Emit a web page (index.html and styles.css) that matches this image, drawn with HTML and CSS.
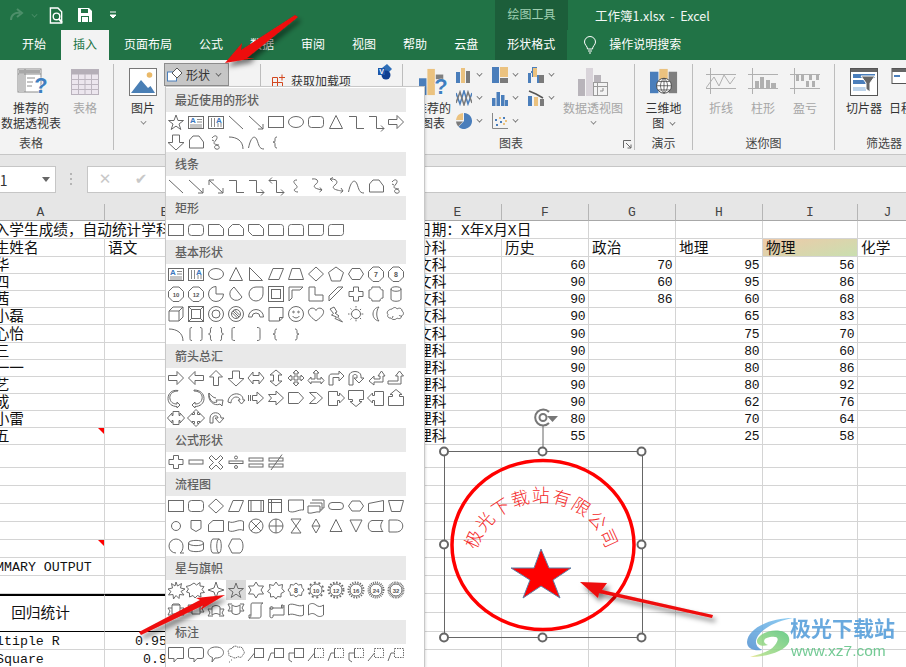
FILE: index.html
```html
<!DOCTYPE html>
<html lang="zh-CN">
<head>
<meta charset="utf-8">
<title>工作簿1.xlsx - Excel</title>
<link rel="stylesheet" href="styles.css">
</head>
<body>
<svg class="defs" width="0" height="0">
<symbol id="st" viewBox="0 0 20 20"><path d="M10 3l2 5.500h5.500l-4.500 3.500 1.800 5.500-4.800-3.400-4.800 3.400 1.800-5.500-4.500-3.500h5.500z"/></symbol>
<symbol id="tb" viewBox="0 0 20 20"><rect x="2.500" y="4.500" width="15" height="12"/><path d="M11 7.500h5M11 10h5M4 13h12M4 15h12" stroke="#8a8a8a"/></symbol>
<symbol id="vt" viewBox="0 0 20 20"><rect x="2.500" y="4.500" width="15" height="12"/><path d="M5.500 6v9M8.500 6v9M15 11v4M12 11v4" stroke="#8a8a8a"/></symbol>
<symbol id="ln" viewBox="0 0 20 20"><path d="M3 4l14 13"/></symbol>
<symbol id="la" viewBox="0 0 20 20"><path d="M3 4l14 13M17 12v5h-5"/></symbol>
<symbol id="da" viewBox="0 0 20 20"><path d="M3 4l14 13M17 12v5h-5M3 9V4h5"/></symbol>
<symbol id="re" viewBox="0 0 20 20"><rect x="2.500" y="4.500" width="15" height="11"/></symbol>
<symbol id="ov" viewBox="0 0 20 20"><ellipse cx="10" cy="10" rx="7.500" ry="5.500"/></symbol>
<symbol id="rr" viewBox="0 0 20 20"><rect x="2.500" y="4.500" width="15" height="11" rx="3"/></symbol>
<symbol id="tr" viewBox="0 0 20 20"><path d="M10 3.500l6.500 13h-13z"/></symbol>
<symbol id="el" viewBox="0 0 20 20"><path d="M3 4.500h7.500v12H18"/></symbol>
<symbol id="ea" viewBox="0 0 20 20"><path d="M3 4.500h7.500v12H18M15 13.500l3 3-3 3"/></symbol>
<symbol id="ed" viewBox="0 0 20 20"><path d="M3 4.500h7.500v12H18M15 13.500l3 3-3 3M6 1.500l-3 3 3 3"/></symbol>
<symbol id="ar" viewBox="0 0 20 20"><path d="M2.500 7.500h8.500V3.500l6.500 6.500-6.500 6.500v-4H2.500z"/></symbol>
<symbol id="al" viewBox="0 0 20 20"><path d="M17.500 7.500H9V3.500L2.500 10 9 16.500v-4h8.500z"/></symbol>
<symbol id="au" viewBox="0 0 20 20"><path d="M7.500 17.500V9h-4L10 2.500 16.500 9h-4v8.500z"/></symbol>
<symbol id="ad" viewBox="0 0 20 20"><path d="M6.500 3h7v7.500h4.500L10 18 2 10.500h4.500z"/></symbol>
<symbol id="ff" viewBox="0 0 20 20"><path d="M7 4h6l4.500 6v6h-14V8z"/></symbol>
<symbol id="sc" viewBox="0 0 20 20"><path d="M6 6c3-4 7-2 4 2s-3 3 1 5 2 5-1 4-1-5 3-4M6 8l2 1"/></symbol>
<symbol id="ac" viewBox="0 0 20 20"><path d="M3 5c8 0 14 4 14 12"/></symbol>
<symbol id="cv" viewBox="0 0 20 20"><path d="M2.500 16C5 4 9 3 11 8s2 9 7 9"/></symbol>
<symbol id="lb" viewBox="0 0 20 20"><path d="M11 5c-2 0-2 1-2 3s0 2-2 2c2 0 2 1 2 3s0 3 2 3"/></symbol>
<symbol id="rb" viewBox="0 0 20 20"><path d="M9 5c2 0 2 1 2 3s0 2 2 2c-2 0-2 1-2 3s0 3-2 3"/></symbol>
<symbol id="c1" viewBox="0 0 20 20"><path d="M11 4c-5 0-3 3-1 5s1 3-1 4 0 3 3 3"/></symbol>
<symbol id="c2" viewBox="0 0 20 20"><path d="M6 3c6-1 7 3 4 5s-2 4 2 5l4 1M14 11.500l2 2.500-2.500 2"/></symbol>
<symbol id="c3" viewBox="0 0 20 20"><path d="M5 3c7 0 7 4 4 6s-2 4 2 5 5 1 6 1M15 12l2 3-2.500 2M7 1.500L4 3l2.500 2.500"/></symbol>
<symbol id="s1" viewBox="0 0 20 20"><path d="M2.500 4.500h11l4 4v7h-15z"/></symbol>
<symbol id="s2" viewBox="0 0 20 20"><path d="M6.500 4.500h7l4 4v7h-15v-7z"/></symbol>
<symbol id="s3" viewBox="0 0 20 20"><path d="M2.500 4.500h11l4 4v7h-11l-4-4z"/></symbol>
<symbol id="s4" viewBox="0 0 20 20"><path d="M2.500 4.500h12c2 0 3 1 3 3v8h-15z"/></symbol>
<symbol id="s5" viewBox="0 0 20 20"><path d="M5.500 4.500h9c2 0 3 1 3 3v8h-15v-8c0-2 1-3 3-3z"/></symbol>
<symbol id="s6" viewBox="0 0 20 20"><path d="M2.500 4.500h15v8c0 2-1 3-3 3h-12z"/></symbol>
<symbol id="s7" viewBox="0 0 20 20"><path d="M5.500 4.500h12v8c0 2-1 3-3 3h-12v-8c0-2 1-3 3-3z"/></symbol>
<symbol id="rt" viewBox="0 0 20 20"><path d="M3.500 3.500v13h13z"/></symbol>
<symbol id="pg" viewBox="0 0 20 20"><path d="M7 4.500h10.500L13 15.500H2.500z"/></symbol>
<symbol id="tz" viewBox="0 0 20 20"><path d="M6 4.500h8l3.500 11h-15z"/></symbol>
<symbol id="di" viewBox="0 0 20 20"><path d="M10 3l7.500 7-7.500 7-7.500-7z"/></symbol>
<symbol id="pn" viewBox="0 0 20 20"><path d="M10 3l7.500 5.500-3 8.500h-9l-3-8.500z"/></symbol>
<symbol id="hx" viewBox="0 0 20 20"><path d="M6 4.500h8l3.500 5.500-3.500 5.500H6L2.500 10z"/></symbol>
<symbol id="oc" viewBox="0 0 20 20"><path d="M7 3h6l4.500 4.500v5.500L13 17.500H7L2.500 13V7.500z"/></symbol>
<symbol id="pi" viewBox="0 0 20 20"><path d="M10 10h7.500A7.500 7.500 0 1 1 10 2.500z"/></symbol>
<symbol id="ch" viewBox="0 0 20 20"><path d="M8 3L16 13a6.500 6.500 0 1 1-10-8z"/></symbol>
<symbol id="td" viewBox="0 0 20 20"><path d="M17 3v7a7 7 0 1 1-7-7z"/></symbol>
<symbol id="fr" viewBox="0 0 20 20"><rect x="2.500" y="2.500" width="15" height="15"/><rect x="5.500" y="5.500" width="9" height="9"/></symbol>
<symbol id="hf" viewBox="0 0 20 20"><path d="M3 17V3h14l-3 3H6v8z"/></symbol>
<symbol id="lh" viewBox="0 0 20 20"><path d="M3 3h6v8h8v6H3z"/></symbol>
<symbol id="ds" viewBox="0 0 20 20"><path d="M3 17v-5L12 3h5z"/></symbol>
<symbol id="pl" viewBox="0 0 20 20"><path d="M7.500 3h5v4.500H17v5h-4.500V17h-5v-4.500H3v-5h4.500z"/></symbol>
<symbol id="pq" viewBox="0 0 20 20"><path d="M6 3h8c0 2 1 3 3 3v8c-2 0-3 1-3 3H6c0-2-1-3-3-3V6c2 0 3-1 3-3z"/></symbol>
<symbol id="cn" viewBox="0 0 20 20"><path d="M5 5v10c0 3 10 3 10 0V5M5 5c0-3 10-3 10 0s-10 3-10 0z"/></symbol>
<symbol id="cb" viewBox="0 0 20 20"><path d="M3 7l4-4h10v10l-4 4H3zM3 7h10v10M13 7l4-4"/></symbol>
<symbol id="bv" viewBox="0 0 20 20"><rect x="2.500" y="2.500" width="15" height="15"/><rect x="5.500" y="5.500" width="9" height="9"/><path d="M2.500 2.500l3 3M17.500 2.500l-3 3M2.500 17.500l3-3M17.500 17.500l-3-3"/></symbol>
<symbol id="dn" viewBox="0 0 20 20"><circle cx="10" cy="10" r="7.500"/><circle cx="10" cy="10" r="4"/></symbol>
<symbol id="ns" viewBox="0 0 20 20"><circle cx="10" cy="10" r="7.500"/><circle cx="10" cy="10" r="4.500"/><path d="M7 7l6 6M6 8.500l5.500 5.500M8.500 6l5.500 5.500"/></symbol>
<symbol id="ba" viewBox="0 0 20 20"><path d="M2.500 13a7.500 7.500 0 0 1 15 0h-3.500a4 4 0 0 0-8 0z"/></symbol>
<symbol id="fc" viewBox="0 0 20 20"><path d="M3 3.500h14v10l-3.500 3.500H3zM17 13.500h-3.500V17"/></symbol>
<symbol id="sm" viewBox="0 0 20 20"><circle cx="10" cy="10" r="7.500"/><circle cx="7.500" cy="8" r=".8"/><circle cx="12.500" cy="8" r=".8"/><path d="M6.500 12c2 2.500 5 2.500 7 0"/></symbol>
<symbol id="ht" viewBox="0 0 20 20"><path d="M10 17C3 12 2 9 2.500 7c1-3.500 6-4 7.500-.5 1.500-3.500 6.500-3 7.500.5.500 2-.5 5-7.500 10z"/></symbol>
<symbol id="lt" viewBox="0 0 20 20"><path d="M4 5l4-2 3 5-2 1 4 3-1.500 1 5 5-7.500-3.500 1.500-1.500-5-2 2-1.500z"/></symbol>
<symbol id="su" viewBox="0 0 20 20"><circle cx="10" cy="10" r="4.500"/><path d="M10 2v2.500M10 15.500V18M2 10h2.500M15.500 10H18M4.500 4.500l1.500 1.500M14 14l1.500 1.500M4.500 15.500L6 14M14 6l1.500-1.500" stroke-dasharray="1.500 .7"/></symbol>
<symbol id="mo" viewBox="0 0 20 20"><path d="M13 3c-8 1-8 13 0 14-3-3-3-11 0-14z"/></symbol>
<symbol id="cl" viewBox="0 0 20 20"><path d="M6 5c2-2 4-2 5 0 2-1.500 5-1 5 2 2 1 2 4-.5 5 0 3-3 3-4.500 2-1 2-5 2-6 0-3 .5-4-2-3-3.500-2-2 0-5 4-5.500zM15.500 12c-1 0-2 0-2.500-1M6 14c.5-.500 1-1 1-2"/></symbol>
<symbol id="bp" viewBox="0 0 20 20"><path d="M6 3.500c-2 0-2 1-2 2v9c0 1 0 2 2 2M14 3.500c2 0 2 1 2 2v9c0 1 0 2-2 2"/></symbol>
<symbol id="bc" viewBox="0 0 20 20"><path d="M6 3.500c-2 0-1.500 2-1.500 3.500S4 10 2.500 10c1.500 0 2 1.500 2 3s-.5 3.500 1.500 3.500M14 3.500c2 0 1.500 2 1.500 3.500s.5 3 2 3c-1.500 0-2 1.500-2 3s.5 3.500-1.500 3.500"/></symbol>
<symbol id="lk" viewBox="0 0 20 20"><path d="M9 3.500c-3 0-3 1-3 2v9c0 1 0 2 3 2"/></symbol>
<symbol id="rk" viewBox="0 0 20 20"><path d="M11 3.500c3 0 3 1 3 2v9c0 1 0 2-3 2"/></symbol>
<symbol id="lr" viewBox="0 0 20 20"><path d="M2 10l5-6v3.500h6V4l5 6-5 6v-3.500H7V16z"/></symbol>
<symbol id="ud" viewBox="0 0 20 20"><path d="M10 2l6 5h-3.500v6H16l-6 5-6-5h3.500V7H4z"/></symbol>
<symbol id="qa" viewBox="0 0 20 20"><path d="M10 2l3 3h-2v4h4V7l3 3-3 3v-2h-4v4h2l-3 3-3-3h2v-4H5v2l-3-3 3-3v2h4V5H7z"/></symbol>
<symbol id="lu" viewBox="0 0 20 20"><path d="M10 2l3 3h-2v6h4V9l3 3.500L15 16v-2H5v2l-3-3.500L5 9v2h4V5H7z"/></symbol>
<symbol id="be" viewBox="0 0 20 20"><path d="M3 17V9c0-2 1-3 3-3h7V3l5 5-5 5V9.500H7V17z"/></symbol>
<symbol id="ut" viewBox="0 0 20 20"><path d="M3 17V8c0-6 12-6 12 0v2h3l-5 5-5-5h3V8c0-2-4-2-4 0v9z"/></symbol>
<symbol id="lt2" viewBox="0 0 20 20"><path d="M3 13l5-5v3h6V8h-2l3.500-5L19 8h-2v6H8v3z"/></symbol>
<symbol id="bu" viewBox="0 0 20 20"><path d="M2 13h10V8h-2.500L13.500 3l4 5H15v8H2z"/></symbol>
<symbol id="cr" viewBox="0 0 20 20"><path d="M12 3C6 3 3 7 4 11s4 5 7 5v-2l3 3-3 3v-1.500c-5 0-9-3-9-8s4-9 10-8z"/></symbol>
<symbol id="cf" viewBox="0 0 20 20"><path d="M8 3c6 0 9 4 8 8s-4 5-7 5v-2l-3 3 3 3v-1.500c5 0 9-3 9-8S14 2 8 2z"/></symbol>
<symbol id="cu" viewBox="0 0 20 20"><path d="M3 5c0 6 3 11 8 9l-1-2 7 0-1 6-2-2c-6 3-13-4-11-11zM3 5c2 2 4 5 7 5"/></symbol>
<symbol id="cd" viewBox="0 0 20 20"><path d="M2 14c0-6 6-9 10-8s5 3 5 6h2l-3.500 4-3.500-4h2c0-2-2-3-4-3s-5 2-5 6z"/></symbol>
<symbol id="sa" viewBox="0 0 20 20"><path d="M2.500 7v6M4.500 7v6M6.500 7.500H11V4l6.500 6-6.500 6v-3.500H6.500z"/></symbol>
<symbol id="no" viewBox="0 0 20 20"><path d="M2.500 6.500H10V3l7.500 7-7.500 7v-3.500H2.500L5.500 10z"/></symbol>
<symbol id="hp" viewBox="0 0 20 20"><path d="M2.500 4.500h10l5 5.500-5 5.500h-10z"/></symbol>
<symbol id="cv2" viewBox="0 0 20 20"><path d="M3.500 4.500h7l6 5.500-6 5.500h-7l6-5.500z"/></symbol>
<symbol id="ca" viewBox="0 0 20 20"><path d="M2.500 3.500h9v4h2V5l5 5-5 5v-2.500h-2v5h-9z"/></symbol>
<symbol id="cw" viewBox="0 0 20 20"><path d="M2.500 2.500h15v9h-4v2h2.500l-6 5-6-5h2.500v-2h-4z"/></symbol>
<symbol id="cg" viewBox="0 0 20 20"><path d="M17.500 3.500h-9v4h-2V5l-5 5 5 5v-2.500h2v5h9z"/></symbol>
<symbol id="cj" viewBox="0 0 20 20"><path d="M2.500 17.500v-9h4v-2H4l6-5 6 5h-2.500v2h4v9z"/></symbol>
<symbol id="ck" viewBox="0 0 20 20"><path d="M7 3.500h6v4h1V5l4.500 5L14 15v-2.500h-1v4H7v-4H6V15l-4.500-5L6 5v2.500h1z"/></symbol>
<symbol id="cq" viewBox="0 0 20 20"><path d="M10 1.500l3 3h-1.500v2H14l-.5-1.500 5 5-5 5 .5-1.500h-2.500v2H13l-3 3-3-3h1.500v-2H6l.5 1.500-5-5 5-5L6 6.500h2.500v-2H7z"/></symbol>
<symbol id="ca2" viewBox="0 0 20 20"><path d="M4 15V10c0-7 11-7 11 0h3l-4.500 5L9 10h3c0-3-5-3-5 0v5z"/></symbol>
<symbol id="pm" viewBox="0 0 20 20"><path d="M7.500 3.500h5v4H17v5h-4.500v4h-5v-4H3v-5h4.500z"/></symbol>
<symbol id="mi" viewBox="0 0 20 20"><rect x="3" y="8" width="14" height="4"/></symbol>
<symbol id="ti" viewBox="0 0 20 20"><path d="M5.500 3.500L10 8l4.500-4.500 2.500 2.500L12.500 10.500 17 15l-2.500 2.500L10 13l-4.500 4.500L3 15l4.500-4.500L3 6z"/></symbol>
<symbol id="dv" viewBox="0 0 20 20"><rect x="3" y="9" width="14" height="2.500"/><circle cx="10" cy="5.500" r="1.500"/><circle cx="10" cy="15" r="1.500"/></symbol>
<symbol id="eq" viewBox="0 0 20 20"><rect x="3" y="6" width="14" height="3"/><rect x="3" y="12" width="14" height="3"/></symbol>
<symbol id="ne" viewBox="0 0 20 20"><rect x="3" y="6" width="14" height="3"/><rect x="3" y="12" width="14" height="3"/><path d="M5 18L16 2.500"/></symbol>
<symbol id="fp" viewBox="0 0 20 20"><rect x="2.500" y="4.500" width="15" height="11"/><path d="M5 4.500v11M15 4.500v11"/></symbol>
<symbol id="fi" viewBox="0 0 20 20"><rect x="2.500" y="3.500" width="13" height="13"/><path d="M2.500 6.500h13M5.500 3.500v13"/></symbol>
<symbol id="fd" viewBox="0 0 20 20"><path d="M2.500 4h15v10c-5-1-10 4-15 1z"/></symbol>
<symbol id="fm" viewBox="0 0 20 20"><path d="M6 4h12v8h-2M4 7h12v7h-2M2 10h12v6c-4-1-8 2-12 1z"/></symbol>
<symbol id="ft" viewBox="0 0 20 20"><rect x="2.500" y="6.500" width="15" height="7" rx="3.500"/></symbol>
<symbol id="fh" viewBox="0 0 20 20"><path d="M6 5h8l3.500 5-3.500 5H6l-3.500-5z"/></symbol>
<symbol id="fn" viewBox="0 0 20 20"><path d="M2.500 7.500l15-3v11h-15z"/></symbol>
<symbol id="fo" viewBox="0 0 20 20"><path d="M2.500 4.500h15l-3 11h-9z"/></symbol>
<symbol id="fc2" viewBox="0 0 20 20"><circle cx="10" cy="10" r="4.500"/></symbol>
<symbol id="fg" viewBox="0 0 20 20"><path d="M5 4.500h10v8l-5 3-5-3z"/></symbol>
<symbol id="fk" viewBox="0 0 20 20"><path d="M7 4.500h10.500v11h-15v-7z"/></symbol>
<symbol id="fa" viewBox="0 0 20 20"><path d="M2.500 5.500c5 3 10-3 15 0v9c-5-3-10 3-15 0z"/></symbol>
<symbol id="fj" viewBox="0 0 20 20"><circle cx="10" cy="10" r="7"/><path d="M5 5l10 10M15 5L5 15"/></symbol>
<symbol id="fr2" viewBox="0 0 20 20"><circle cx="10" cy="10" r="7"/><path d="M10 3v14M3 10h14"/></symbol>
<symbol id="fl" viewBox="0 0 20 20"><path d="M5 3h10l-10 14h10z"/></symbol>
<symbol id="fs" viewBox="0 0 20 20"><path d="M10 3l4 7-4 7-4-7zM6 10h8"/></symbol>
<symbol id="fx" viewBox="0 0 20 20"><path d="M10 3.500l6 12H4z"/></symbol>
<symbol id="fe" viewBox="0 0 20 20"><path d="M4 4h12l-6 12z"/></symbol>
<symbol id="fb" viewBox="0 0 20 20"><path d="M6 4.500h11c-3 3-3 8 0 11H6c-5-1-5-10 0-11z"/></symbol>
<symbol id="fw" viewBox="0 0 20 20"><path d="M3 4h7c9 0 9 12 0 12H3z"/></symbol>
<symbol id="fq" viewBox="0 0 20 20"><path d="M10 17a7 7 0 1 1 7-7c0 3-1 6-3 7h4"/></symbol>
<symbol id="fy" viewBox="0 0 20 20"><path d="M2.500 7v6c0 3.500 15 3.500 15 0V7M2.500 7c0-3.500 15-3.500 15 0s-15 3.500-15 0z"/></symbol>
<symbol id="fz" viewBox="0 0 20 20"><path d="M7 3h6c3 0 3 14 0 14H7C4 17 4 3 7 3zM13 3c-3 0-3 14 0 14"/></symbol>
<symbol id="ff2" viewBox="0 0 20 20"><path d="M6 3h8c4 2 4 12 0 14H6l-3.500-7z"/></symbol>
<symbol id="x1" viewBox="0 0 20 20"><path d="M10 2l1.500 4 4-2.500-1 4.500 4.500 1-4 2.500 3 3.500-4.500-.5-.5 4-3-3-2.500 3.500-.5-4.500-4.500.5 2.500-3.500L2 9l4.500-1-1-4.500 3.500 2.500z"/></symbol>
<symbol id="x2" viewBox="0 0 20 20"><path d="M8 3l2.500 2 3.500-2.500 0 3.500 4 .5-2 3 2.500 3-4 .5.500 4-3.500-1.500-2.500 2.500-2-2.500-3.500 1.500 0-4-3-1 2-3-2.500-2.500 4-1z"/></symbol>
<symbol id="s4p" viewBox="0 0 20 20"><path d="M10 2l2 6 6 2-6 2-2 6-2-6-6-2 6-2z"/></symbol>
<symbol id="s6p" viewBox="0 0 20 20"><path d="M10 2l2.500 4h5l-2.500 4 2.500 4h-5l-2.500 4-2.500-4h-5l2.500-4-2.500-4h5z"/></symbol>
<symbol id="s7p" viewBox="0 0 20 20"><path d="M10 2l2.500 3.500 4-1-.5 4.200 2.500 2.800-3.500 2 0 3.500-3.500-.5-1.500 2.500-2-2.500-3.500.5 0-3.500-3-2 2.500-2.800-.5-4.200 4 1z"/></symbol>
<symbol id="s8n" viewBox="0 0 20 20"><path d="M10 3l2.500 2 3-.5.5 3 2 2.500-2 2.500-.5 3-3-.5-2.500 2-2.500-2-3 .5-.5-3-2-2.500 2-2.500.5-3 3 .5z"/></symbol>
<symbol id="s10" viewBox="0 0 20 20"><circle cx="10" cy="10" r="7.500" stroke-width="1.800" stroke-dasharray="2 2.700"/><circle cx="10" cy="10" r="6"/></symbol>
<symbol id="s12" viewBox="0 0 20 20"><circle cx="10" cy="10" r="7.500" stroke-width="2" stroke-dasharray="1.600 1.600"/><circle cx="10" cy="10" r="6"/></symbol>
<symbol id="s16" viewBox="0 0 20 20"><circle cx="10" cy="10" r="7.500" stroke-width="2" stroke-dasharray="1.300 1.300"/><circle cx="10" cy="10" r="6"/></symbol>
<symbol id="s24" viewBox="0 0 20 20"><circle cx="10" cy="10" r="7.500" stroke-width="2" stroke-dasharray="1 1"/><circle cx="10" cy="10" r="6"/></symbol>
<symbol id="s32" viewBox="0 0 20 20"><circle cx="10" cy="10" r="7.500" stroke-width="2" stroke-dasharray=".8 .7"/><circle cx="10" cy="10" r="6"/></symbol>
<symbol id="r1" viewBox="0 0 20 20"><path d="M6 5h8v9H6zM6 8H2l2 3-2 4h6v-1M14 8h4l-2 3 2 4h-6v-1M6 5l1-1 6 0 1 1"/></symbol>
<symbol id="r2" viewBox="0 0 20 20"><path d="M6 5h8v9H6zM6 12H2l2-3-2-4h4M14 12h4l-2-3 2-4h-4"/></symbol>
<symbol id="r3" viewBox="0 0 20 20"><path d="M6 7c3-2 5-2 8 0v8c-3-2-5-2-8 0zM6 9H2l2 4-2 3h5M14 9h4l-2 4 2 3h-5"/></symbol>
<symbol id="r4" viewBox="0 0 20 20"><path d="M6 5c3 2 5 2 8 0v8c-3 2-5 2-8 0zM6 11H2l2-3-2-4h4M14 11h4l-2-3 2-4h-4"/></symbol>
<symbol id="sv" viewBox="0 0 20 20"><path d="M6 3h11c-2 0-2 3-2 3v10c0 2-2 2-2 2H3c2 0 2-3 2-3V5c0-2 1-2 1-2zM5 15H3v3"/></symbol>
<symbol id="sh" viewBox="0 0 20 20"><path d="M4 8h13v-3h-1.500v3M4 8v9c0 1 3 1 3 0v-2h11V5M4 8c0-2 3-2 3 0s-3 2-3 0"/></symbol>
<symbol id="wv" viewBox="0 0 20 20"><path d="M2.500 5c5-3 10 3 15 0v10c-5 3-10-3-15 0z"/></symbol>
<symbol id="wd" viewBox="0 0 20 20"><path d="M2.500 5c2.500-2 5-2 7.500 0s5 2 7.500 0v10c-2.500 2-5 2-7.500 0s-5-2-7.500 0z"/></symbol>
<symbol id="k1" viewBox="0 0 20 20"><path d="M2.500 3.500h15v11H11l-3 3.500v-3.500H2.500z"/></symbol>
<symbol id="k2" viewBox="0 0 20 20"><path d="M5 3.500h10c2 0 2.500 1 2.500 2.500v6c0 2-1 2.500-2.500 2.500h-4l-3 3.500v-3.500H5c-2 0-2.500-1-2.500-2.500V6c0-2 1-2.500 2.500-2.500z"/></symbol>
<symbol id="k3" viewBox="0 0 20 20"><path d="M10 3c10 0 10 11 0 11H9l-3 4 .5-4.500C-1 11 1 3 10 3z"/></symbol>
<symbol id="k4" viewBox="0 0 20 20"><path d="M7 3c2-1.500 4-1 5 .5 2-1 5-.5 5 2.500 2 1.500 1.500 4.500-.5 5 0 2.500-3 3-4.500 1.500-1.500 2-5 2-6 0-3 .5-4-2-3-3.500-2-2 0-4.500 3-4.500zM5 16h1M3 18h1" stroke-dasharray="1.500 .6"/></symbol>
<symbol id="k5" viewBox="0 0 20 20"><rect x="8.500" y="4.500" width="9" height="9"/><path d="M8.500 9L2 17"/></symbol>
<symbol id="k6" viewBox="0 0 20 20"><rect x="8.500" y="4.500" width="9" height="9"/><path d="M8.500 9H5L2 17"/></symbol>
<symbol id="k7" viewBox="0 0 20 20"><rect x="8.500" y="4.500" width="9" height="9"/><path d="M8.500 9H3v7l3 2"/></symbol>
<symbol id="k8" viewBox="0 0 20 20"><rect x="8.500" y="4.500" width="9" height="9" stroke-dasharray="1.500 1"/><path d="M8.500 5v9M8.500 9L2 17"/></symbol>
<symbol id="k9" viewBox="0 0 20 20"><rect x="8.500" y="4.500" width="9" height="9" stroke-dasharray="1.500 1"/><path d="M8.500 5v9M8.500 9H5L2 17"/></symbol>
<symbol id="k10" viewBox="0 0 20 20"><rect x="8.500" y="4.500" width="9" height="9" stroke-dasharray="1.500 1"/><path d="M8.500 5v9M8.500 9H3v7l3 2"/></symbol>
<symbol id="k11" viewBox="0 0 20 20"><rect x="8.500" y="4.500" width="9" height="9" stroke-dasharray="1.500 1"/><path d="M8.500 9L2 17"/></symbol>
<symbol id="k12" viewBox="0 0 20 20"><rect x="8.500" y="4.500" width="9" height="9" stroke-dasharray="1.500 1"/><path d="M8.500 9H5L2 17"/></symbol>
</svg>

<div class="app">
  <header class="titlebar">
    <div class="qat">
      <svg class="q-redo" viewBox="0 0 18 14"><path d="M2 12c0-5 4-8 9-7M8 1l5 4-5 4" fill="none" stroke="#4d8f6a" stroke-width="2"/></svg>
      <span class="chev dim"></span>
      <svg class="q-prev" viewBox="0 0 16 18"><path d="M1.500 1h8l4 4v12h-12z" fill="none" stroke="#fff" stroke-width="1.500"/><circle cx="8" cy="10" r="3.500" fill="#217346" stroke="#fff" stroke-width="1.500"/><path d="M10.500 12.500l3.500 4" stroke="#fff" stroke-width="2"/></svg>
      <svg class="q-save" viewBox="0 0 14 14"><path d="M0 0h11l3 3v11H0z" fill="#fff"/><rect x="3" y="1" width="7" height="4" fill="#217346"/><rect x="3" y="8" width="8" height="6" fill="#217346"/><rect x="4" y="9" width="6" height="5" fill="#fff"/></svg>
      <svg class="q-more" viewBox="0 0 8 8"><path d="M1 1h6M1 4h6l-3 3z" fill="#fff" stroke="#fff"/></svg>
    </div>
    <div class="ctx-title">绘图工具</div>
    <div class="doc-title">工作簿1.xlsx&nbsp; -&nbsp; Excel</div>
  </header>

  <nav class="tabs">
    <span class="tab">开始</span>
    <span class="tab on">插入</span>
    <span class="tab">页面布局</span>
    <span class="tab">公式</span>
    <span class="tab">数据</span>
    <span class="tab">审阅</span>
    <span class="tab">视图</span>
    <span class="tab">帮助</span>
    <span class="tab">云盘</span>
    <span class="tab ctx">形状格式</span>
    <svg class="bulb" viewBox="0 0 14 18"><path d="M4.500 13c0-3-3-4-3-7a5.500 5.500 0 0 1 11 0c0 3-3 4-3 7zM5 15h4M6 17h2" fill="none" stroke="#fff"/></svg>
    <span class="search">操作说明搜索</span>
  </nav>

  <section class="ribbon">
    <div class="g g1">
      <div class="gb">
        <div class="b w62">
          <svg class="ico" viewBox="0 0 28 28"><rect x="1" y="1" width="23" height="23" fill="#fff" stroke="#8c8c8c"/><path d="M1 6h23M8 1v23" stroke="#8c8c8c"/><rect x="2" y="2" width="21" height="3.500" fill="#a8a8a8"/><rect x="2" y="7" width="5.500" height="16" fill="#c4c4c4"/><path d="M10 10h8M10 14h6M10 18h5" stroke="#8c8c8c"/></svg>
          <svg class="qm" viewBox="0 0 16 22"><text x="8" y="19" class="qt">?</text></svg>
          <span>推荐的</span><span>数据透视表</span>
        </div>
        <div class="b w28 off">
          <svg class="ico" viewBox="0 0 28 28"><rect x="0.500" y="1.500" width="27" height="25" fill="#ece6ee" stroke="#b9b2bc"/><rect x="0.500" y="1.500" width="27" height="5" fill="#b5afb8"/><path d="M0 11.500h28M0 16.500h28M0 21.500h28M7.500 6v21M14 6v21M20.500 6v21" stroke="#bdb6c0"/></svg>
          <span>表格</span>
        </div>
      </div>
      <div class="lab w62">表格</div>
    </div>

    <div class="g g2">
      <div class="gb">
        <div class="b w28 ml15">
          <svg class="ico" viewBox="0 0 28 28"><rect x=".5" y=".5" width="27" height="27" fill="#fff" stroke="#777"/><circle cx="20.500" cy="7" r="2.800" fill="#eab968"/><path d="M2 25l10-13 7 8 2.500-2 4.500 7z" fill="#4a7fb5"/></svg>
          <span>图片</span><span class="chev"></span>
        </div>
        <div class="shapes">
          <svg class="shp" viewBox="0 0 16 16"><rect x=".5" y="5" width="9" height="9" fill="#fff" stroke="#4a7ebb"/><path d="M10 1l5 5-5 5-5-5z" fill="#fff" stroke="#555"/></svg>
          <span>形状</span><span class="chev tight"></span>
        </div>
      </div>
    </div>

    <div class="g g3">
      <div class="addin">
        <svg class="ai" viewBox="0 0 14 14"><path d="M.5 3.500h5v5h5v5H.5zM5.500 8.500v5M.5 8.500h5M10 .5v6M7 3.500h6" fill="none" stroke="#d2471f"/></svg>
        <span>获取加载项</span>
        <svg class="vs" viewBox="0 0 14 16"><path d="M4 4l5-4 5 5-5 5z" fill="#2f6fb8"/><circle cx="8" cy="11" r="4.500" fill="#103f91"/><rect y="4" width="7" height="7" fill="#1c57ab"/><text x="3.500" y="10" class="vt">V</text></svg>
      </div>
    </div>

    <div class="g g4">
      <div class="gb">
        <div class="b w30 ml15 nw">
          <svg class="ico" viewBox="0 0 30 28"><rect x="0" y="10" width="8" height="18" fill="#4a7ebb"/><rect x="9" y="0" width="8" height="28" fill="#ebc27f"/><rect x="18" y="6" width="8" height="5" fill="#7f7f7f"/></svg>
          <svg class="qm qm2" viewBox="0 0 16 22"><text x="8" y="19" class="qt">?</text></svg>
          <span>推荐的</span><span>图表</span>
        </div>
        <div class="cgrid">
          <div class="ci"><svg viewBox="0 0 16 16"><rect y="5" width="4" height="11" fill="#4a7ebb"/><rect x="5" y="1" width="4" height="15" fill="#ebc27f"/><rect x="10" y="4" width="4" height="12" fill="#7a7a7a"/></svg><span class="chev"></span></div>
          <div class="ci"><svg viewBox="0 0 16 16"><rect width="7" height="16" fill="#4a7ebb"/><rect x="8" width="8" height="10" fill="#ebc27f"/><rect x="8" y="11" width="8" height="5" fill="#7a7a7a"/></svg><span class="chev"></span></div>
          <div class="ci"><svg viewBox="0 0 16 16"><path d="M0 16V6h4V0h5v8h4v8H9V10H4V4H3v12z" fill="#4a7ebb"/><path d="M5 1h4v9H5z" fill="#ebc27f"/><path d="M11 8h5v8h-5z" fill="#7a7a7a"/></svg><span class="chev"></span></div>
          <div class="ci"><svg viewBox="0 0 16 16"><path d="M0 3l4 11 4-13 4 13 4-11" fill="none" stroke="#4a7ebb" stroke-width="1.500"/><path d="M0 13l4-11 4 13 4-13 4 11" fill="none" stroke="#7a7a7a" stroke-width="1.500"/></svg><span class="chev"></span></div>
          <div class="ci"><svg viewBox="0 0 16 16"><rect y="8" width="3.500" height="8" fill="#4a7ebb"/><rect x="4.500" y="2" width="3.500" height="14" fill="#4a7ebb"/><rect x="9" y="5" width="3.500" height="11" fill="#4a7ebb"/><rect x="13" y="10" width="3" height="6" fill="#4a7ebb"/></svg><span class="chev"></span></div>
          <div class="ci"><svg viewBox="0 0 16 16"><rect y="6" width="4" height="10" fill="#4a7ebb"/><rect x="6" y="7" width="4" height="9" fill="#ebc27f"/><rect x="12" y="9" width="4" height="7" fill="#7a7a7a"/><path d="M1 1l7 3 7 4" stroke="#555" fill="none" stroke-width="1.500"/></svg><span class="chev"></span></div>
          <div class="ci"><svg viewBox="0 0 16 16"><path d="M8 8V0a8 8 0 1 1-5.500 13.800z" fill="#4a7ebb"/><path d="M7 7V0A8 8 0 0 0 0 7z" fill="#ebc27f"/><path d="M0 8.500h7l-4.800 5A8 8 0 0 1 0 8.500z" fill="#7a7a7a"/></svg><span class="chev"></span></div>
          <div class="ci"><svg viewBox="0 0 16 16"><path d="M.5 0v15.500H16" fill="none" stroke="#888"/><path d="M4 12h2M8 9h2M3 7h2M11 5h2" stroke="#4a7ebb" stroke-width="2"/><path d="M7 5h2M11 11h2M13 8h2" stroke="#ebc27f" stroke-width="2"/></svg><span class="chev"></span></div>
        </div>
        <div class="b w60 off pivot">
          <svg class="ico w30" viewBox="0 0 30 28"><rect y="11" width="7" height="17" fill="#b8b4ba"/><rect x="8" y="0" width="7" height="28" fill="#d9d4da"/><rect x="16" y="7" width="7" height="21" fill="#b8b4ba"/><rect x="15.500" y="14.500" width="14" height="13" fill="#f3f3f3" stroke="#9a9a9a"/><path d="M16 18.500h13M19.500 15v12" stroke="#9a9a9a"/><path d="M25 20v3h-3" fill="none" stroke="#8a8a8a"/></svg>
          <span>数据透视图</span><span class="chev"></span>
        </div>
      </div>
      <div class="lab flexlab"><span class="chart-lab">图表</span><svg class="launch" viewBox="0 0 9 9"><path d="M.5 8V.5H8M3 3l5 5M8 4.500V8H4.500" fill="none" stroke="#666"/></svg></div>
    </div>

    <div class="g g5">
      <div class="gb">
        <div class="b w57">
          <svg class="ico" viewBox="0 0 30 28"><rect y="3" width="9" height="23" fill="#4a7ebb"/><rect x="10" y="0" width="9" height="24" fill="#ebc27f"/><rect x="20" y="3" width="9" height="23" fill="#7f7f7f"/><circle cx="15" cy="18" r="8" fill="#fff" stroke="#444"/><path d="M7 18h16M15 10v16M9 13.500h12M9 22.500h12M15 10c-5 4-5 12 0 16M15 10c5 4 5 12 0 16" fill="none" stroke="#444" stroke-width=".8"/></svg>
          <span>三维地</span><span>图 <i class="chev inl"></i></span>
        </div>
      </div>
      <div class="lab">演示</div>
    </div>

    <div class="g g6">
      <div class="gb">
        <div class="b w42 off"><svg class="spark" viewBox="0 0 30 26"><path d="M0 6.500h30M0 20.500h30M4.500 0v26M0 20l8-11 5 9 5-11 6 9 5-7" fill="none" stroke="#b0b0b0"/></svg><span>折线</span></div>
        <div class="b w42 off"><svg class="spark" viewBox="0 0 30 26"><path d="M0 6.500h30M0 20.500h30M4.500 0v26" fill="none" stroke="#b0b0b0"/><path d="M7 13h4v7H7zM12 9h4v11h-4zM18 12h4v8h-4zM23 15h5v5h-5z" fill="#b0b0b0"/></svg><span>柱形</span></div>
        <div class="b w42 off"><svg class="spark" viewBox="0 0 30 26"><path d="M0 6.500h30M0 20.500h30M4.500 0v26" fill="none" stroke="#b0b0b0"/><path d="M6 7h3v6H6zM11 7h3v6h-3zM16 13h3v6h-3zM19 7h3v5h-3zM22 13h3v6h-3zM26 7h3v5h-3z" fill="#b0b0b0"/></svg><span>盈亏</span></div>
      </div>
      <div class="lab">迷你图</div>
    </div>

    <div class="g g7">
      <div class="gb">
        <div class="b w36">
          <svg class="ico" viewBox="0 0 28 28"><rect x=".5" y=".5" width="27" height="27" fill="#fff" stroke="#555"/><rect x="1" y="1" width="26" height="3" fill="#666"/><rect x="3" y="6" width="22" height="4" fill="#4a7ebb"/><rect x="3" y="12" width="16" height="4" fill="#4a7ebb"/><rect x="3" y="19" width="13" height="4" fill="#bcd3ea"/><path d="M11 8h14l-5 7v9l-4-3v-6z" fill="#666" stroke="#fff"/></svg>
          <span>切片器</span>
        </div>
        <div class="b w36 tl ml7">
          <svg class="ico" viewBox="0 0 28 28"><rect x="3" y=".5" width="28" height="15" fill="#fff" stroke="#555"/><rect x="3" y="1" width="28" height="3" fill="#666"/><rect x="5" y="7" width="6" height="2" fill="#4a7ebb"/></svg>
          <span>日程表</span>
        </div>
      </div>
      <div class="lab fl">筛选器</div>
    </div>
  </section>

  <div class="gap"></div>

  <div class="fbar">
    <div class="namebox"><span>11</span><i class="tri"></i></div>
    <span class="dots"></span>
    <span class="fx">✕</span>
    <span class="fx">✔</span>
  </div>

  <div class="sheet">
    <table class="grid">
      <colgroup><col class="ca"><col class="cb"><col class="cc"><col class="cd"><col class="ce"><col class="cf"><col class="cg2"><col class="ch2"><col class="ci2"><col class="cj"></colgroup>
      <thead>
        <tr class="hh"><th>A</th><th>B</th><th>C</th><th>D</th><th>E</th><th>F</th><th>G</th><th>H</th><th>I</th><th>J</th></tr>
      </thead>
      <tbody>
        <tr class="r18"><td class="nb">输入学生成绩，自动统计学科</td><td></td><td></td><td></td><td class="nb">日期：X年X月X日</td><td></td><td></td><td></td><td></td><td></td></tr>
        <tr class="r18"><td>学生姓名</td><td>语文</td><td></td><td></td><td>分科</td><td>历史</td><td>政治</td><td>地理</td><td class="phys">物理</td><td>化学</td></tr>
        <tr class="r17"><td>李华</td><td></td><td></td><td></td><td>文科</td><td class="n">60</td><td class="n">70</td><td class="n">95</td><td class="n">56</td><td></td></tr>
        <tr class="r17"><td>李四</td><td></td><td></td><td></td><td>文科</td><td class="n">90</td><td class="n">60</td><td class="n">95</td><td class="n">86</td><td></td></tr>
        <tr class="r17"><td>王茜</td><td></td><td></td><td></td><td>文科</td><td class="n">90</td><td class="n">86</td><td class="n">60</td><td class="n">68</td><td></td></tr>
        <tr class="r17"><td>王小磊</td><td></td><td></td><td></td><td>文科</td><td class="n">90</td><td></td><td class="n">65</td><td class="n">83</td><td></td></tr>
        <tr class="r18"><td>陈心怡</td><td></td><td></td><td></td><td>文科</td><td class="n">90</td><td></td><td class="n">75</td><td class="n">70</td><td></td></tr>
        <tr class="r17"><td>张三</td><td></td><td></td><td></td><td>理科</td><td class="n">90</td><td></td><td class="n">80</td><td class="n">60</td><td></td></tr>
        <tr class="r17"><td>刘一一</td><td></td><td></td><td></td><td>理科</td><td class="n">90</td><td></td><td class="n">80</td><td class="n">86</td><td></td></tr>
        <tr class="r17"><td>王艺</td><td></td><td></td><td></td><td>理科</td><td class="n">90</td><td></td><td class="n">80</td><td class="n">92</td><td></td></tr>
        <tr class="r17"><td>李成</td><td></td><td></td><td></td><td>理科</td><td class="n">90</td><td></td><td class="n">62</td><td class="n">76</td><td></td></tr>
        <tr class="r17"><td>张小雷</td><td></td><td></td><td></td><td>理科</td><td class="n">80</td><td></td><td class="n">70</td><td class="n">64</td><td></td></tr>
        <tr class="r17"><td class="cmt">王五</td><td></td><td></td><td></td><td>理科</td><td class="n">55</td><td></td><td class="n">25</td><td class="n">58</td><td></td></tr>
        <tr class="r23"><td></td><td></td><td></td><td></td><td></td><td></td><td></td><td></td><td></td><td></td></tr>
        <tr class="r18"><td></td><td></td><td></td><td></td><td></td><td></td><td></td><td></td><td></td><td></td></tr>
        <tr class="r18"><td></td><td></td><td></td><td></td><td></td><td></td><td></td><td></td><td></td><td></td></tr>
        <tr class="r18"><td></td><td></td><td></td><td></td><td></td><td></td><td></td><td></td><td></td><td></td></tr>
        <tr class="r18"><td></td><td></td><td></td><td></td><td></td><td></td><td></td><td></td><td></td><td></td></tr>
        <tr class="r18"><td class="cmt"></td><td></td><td></td><td></td><td></td><td></td><td></td><td></td><td></td><td></td></tr>
        <tr class="r18"><td class="lat">SUMMARY OUTPUT</td><td></td><td></td><td></td><td></td><td></td><td></td><td></td><td></td><td></td></tr>
        <tr class="r18"><td></td><td></td><td></td><td></td><td></td><td></td><td></td><td></td><td></td><td></td></tr>
        <tr class="r19"><td rowspan="2" class="stat">回归统计</td><td rowspan="2" class="stat"></td><td></td><td></td><td></td><td></td><td></td><td></td><td></td><td></td></tr>
        <tr class="r19"><td></td><td></td><td></td><td></td><td></td><td></td><td></td><td></td></tr>
        <tr class="r18"><td class="lat">Multiple R</td><td class="lat p30">0.9512</td><td></td><td></td><td></td><td></td><td></td><td></td><td></td><td></td></tr>
        <tr class="r18"><td class="lat">R Square</td><td class="lat p38">0.904</td><td></td><td></td><td></td><td></td><td></td><td></td><td></td><td></td></tr>
      </tbody>
    </table>
  </div>

  <aside class="menu">
    <div class="mh">最近使用的形状</div>
    <div class="mg">
      <svg class="ic"><use href="#st"/></svg><svg class="ic"><use href="#tb"/><text x="4" y="11" class="bl">A</text></svg><svg class="ic"><use href="#vt"/><text x="10" y="10.500" class="bl">A</text></svg><svg class="ic"><use href="#ln"/></svg><svg class="ic"><use href="#la"/></svg><svg class="ic"><use href="#re"/></svg><svg class="ic"><use href="#ov"/></svg><svg class="ic"><use href="#rr"/></svg><svg class="ic"><use href="#tr"/></svg><svg class="ic"><use href="#el"/></svg><svg class="ic"><use href="#ea"/></svg><svg class="ic"><use href="#ar"/></svg>
      <svg class="ic"><use href="#ad"/></svg><svg class="ic"><use href="#ff"/></svg><svg class="ic"><use href="#sc"/></svg><svg class="ic"><use href="#ac"/></svg><svg class="ic"><use href="#cv"/></svg><svg class="ic"><use href="#lb"/></svg>
    </div>
    <div class="mh">线条</div>
    <div class="mg">
      <svg class="ic"><use href="#ln"/></svg><svg class="ic"><use href="#la"/></svg><svg class="ic"><use href="#da"/></svg><svg class="ic"><use href="#el"/></svg><svg class="ic"><use href="#ea"/></svg><svg class="ic"><use href="#ed"/></svg><svg class="ic"><use href="#c1"/></svg><svg class="ic"><use href="#c2"/></svg><svg class="ic"><use href="#c3"/></svg><svg class="ic"><use href="#cv"/></svg><svg class="ic"><use href="#ff"/></svg><svg class="ic"><use href="#sc"/></svg>
    </div>
    <div class="mh">矩形</div>
    <div class="mg">
      <svg class="ic"><use href="#re"/></svg><svg class="ic"><use href="#rr"/></svg><svg class="ic"><use href="#s1"/></svg><svg class="ic"><use href="#s2"/></svg><svg class="ic"><use href="#s3"/></svg><svg class="ic"><use href="#s4"/></svg><svg class="ic"><use href="#s5"/></svg><svg class="ic"><use href="#s6"/></svg><svg class="ic"><use href="#s7"/></svg>
    </div>
    <div class="mh">基本形状</div>
    <div class="mg">
      <svg class="ic"><use href="#tb"/><text x="4" y="11" class="bl">A</text></svg><svg class="ic"><use href="#vt"/><text x="10" y="10.500" class="bl">A</text></svg><svg class="ic"><use href="#ov"/></svg><svg class="ic"><use href="#tr"/></svg><svg class="ic"><use href="#rt"/></svg><svg class="ic"><use href="#pg"/></svg><svg class="ic"><use href="#tz"/></svg><svg class="ic"><use href="#di"/></svg><svg class="ic"><use href="#pn"/></svg><svg class="ic"><use href="#hx"/></svg><svg class="ic"><use href="#oc"/><text x="10" y="13" class="nm">7</text></svg><svg class="ic"><use href="#oc"/><text x="10" y="13" class="nm">8</text></svg>
      <svg class="ic"><use href="#oc"/><text x="10" y="12.500" class="nm sm">10</text></svg><svg class="ic"><use href="#oc"/><text x="10" y="12.500" class="nm sm">12</text></svg><svg class="ic"><use href="#pi"/></svg><svg class="ic"><use href="#ch"/></svg><svg class="ic"><use href="#td"/></svg><svg class="ic"><use href="#fr"/></svg><svg class="ic"><use href="#hf"/></svg><svg class="ic"><use href="#lh"/></svg><svg class="ic"><use href="#ds"/></svg><svg class="ic"><use href="#pl"/></svg><svg class="ic"><use href="#pq"/></svg><svg class="ic"><use href="#cn"/></svg>
      <svg class="ic"><use href="#cb"/></svg><svg class="ic"><use href="#bv"/></svg><svg class="ic"><use href="#dn"/></svg><svg class="ic"><use href="#ns"/></svg><svg class="ic"><use href="#ba"/></svg><svg class="ic"><use href="#fc"/></svg><svg class="ic"><use href="#sm"/></svg><svg class="ic"><use href="#ht"/></svg><svg class="ic"><use href="#lt"/></svg><svg class="ic"><use href="#su"/></svg><svg class="ic"><use href="#mo"/></svg><svg class="ic"><use href="#cl"/></svg>
      <svg class="ic"><use href="#ac"/></svg><svg class="ic"><use href="#bp"/></svg><svg class="ic"><use href="#bc"/></svg><svg class="ic"><use href="#lk"/></svg><svg class="ic"><use href="#rk"/></svg><svg class="ic"><use href="#lb"/></svg><svg class="ic"><use href="#rb"/></svg>
    </div>
    <div class="mh">箭头总汇</div>
    <div class="mg">
      <svg class="ic"><use href="#ar"/></svg><svg class="ic"><use href="#al"/></svg><svg class="ic"><use href="#au"/></svg><svg class="ic"><use href="#ad"/></svg><svg class="ic"><use href="#lr"/></svg><svg class="ic"><use href="#ud"/></svg><svg class="ic"><use href="#qa"/></svg><svg class="ic"><use href="#lu"/></svg><svg class="ic"><use href="#be"/></svg><svg class="ic"><use href="#ut"/></svg><svg class="ic"><use href="#lt2"/></svg><svg class="ic"><use href="#bu"/></svg>
      <svg class="ic"><use href="#cr"/></svg><svg class="ic"><use href="#cf"/></svg><svg class="ic"><use href="#cu"/></svg><svg class="ic"><use href="#cd"/></svg><svg class="ic"><use href="#sa"/></svg><svg class="ic"><use href="#no"/></svg><svg class="ic"><use href="#hp"/></svg><svg class="ic"><use href="#cv2"/></svg><svg class="ic"><use href="#ca"/></svg><svg class="ic"><use href="#cw"/></svg><svg class="ic"><use href="#cg"/></svg><svg class="ic"><use href="#cj"/></svg>
      <svg class="ic"><use href="#ck"/></svg><svg class="ic"><use href="#cq"/></svg><svg class="ic"><use href="#ca2"/></svg>
    </div>
    <div class="mh">公式形状</div>
    <div class="mg">
      <svg class="ic"><use href="#pm"/></svg><svg class="ic"><use href="#mi"/></svg><svg class="ic"><use href="#ti"/></svg><svg class="ic"><use href="#dv"/></svg><svg class="ic"><use href="#eq"/></svg><svg class="ic"><use href="#ne"/></svg>
    </div>
    <div class="mh">流程图</div>
    <div class="mg">
      <svg class="ic"><use href="#re"/></svg><svg class="ic"><use href="#rr"/></svg><svg class="ic"><use href="#di"/></svg><svg class="ic"><use href="#pg"/></svg><svg class="ic"><use href="#fp"/></svg><svg class="ic"><use href="#fi"/></svg><svg class="ic"><use href="#fd"/></svg><svg class="ic"><use href="#fm"/></svg><svg class="ic"><use href="#ft"/></svg><svg class="ic"><use href="#fh"/></svg><svg class="ic"><use href="#fn"/></svg><svg class="ic"><use href="#fo"/></svg>
      <svg class="ic"><use href="#fc2"/></svg><svg class="ic"><use href="#fg"/></svg><svg class="ic"><use href="#fk"/></svg><svg class="ic"><use href="#fa"/></svg><svg class="ic"><use href="#fj"/></svg><svg class="ic"><use href="#fr2"/></svg><svg class="ic"><use href="#fl"/></svg><svg class="ic"><use href="#fs"/></svg><svg class="ic"><use href="#fx"/></svg><svg class="ic"><use href="#fe"/></svg><svg class="ic"><use href="#fb"/></svg><svg class="ic"><use href="#fw"/></svg>
      <svg class="ic"><use href="#fq"/></svg><svg class="ic"><use href="#fy"/></svg><svg class="ic"><use href="#fz"/></svg><svg class="ic"><use href="#ff2"/></svg>
    </div>
    <div class="mh">星与旗帜</div>
    <div class="mg">
      <svg class="ic"><use href="#x1"/></svg><svg class="ic"><use href="#x2"/></svg><svg class="ic"><use href="#s4p"/></svg><svg class="ic hl"><use href="#st"/></svg><svg class="ic"><use href="#s6p"/></svg><svg class="ic"><use href="#s7p"/></svg><svg class="ic"><use href="#s8n"/><text x="10" y="13" class="nm">8</text></svg><svg class="ic"><use href="#s10"/><text x="10" y="12.500" class="nm sm">10</text></svg><svg class="ic"><use href="#s12"/><text x="10" y="12.500" class="nm sm">12</text></svg><svg class="ic"><use href="#s16"/><text x="10" y="12.500" class="nm sm">16</text></svg><svg class="ic"><use href="#s24"/><text x="10" y="12.500" class="nm sm">24</text></svg><svg class="ic"><use href="#s32"/><text x="10" y="12.500" class="nm sm">32</text></svg>
      <svg class="ic"><use href="#r1"/></svg><svg class="ic"><use href="#r2"/></svg><svg class="ic"><use href="#r3"/></svg><svg class="ic"><use href="#r4"/></svg><svg class="ic"><use href="#sv"/></svg><svg class="ic"><use href="#sh"/></svg><svg class="ic"><use href="#wv"/></svg><svg class="ic"><use href="#wd"/></svg>
    </div>
    <div class="mh">标注</div>
    <div class="mg">
      <svg class="ic"><use href="#k1"/></svg><svg class="ic"><use href="#k2"/></svg><svg class="ic"><use href="#k3"/></svg><svg class="ic"><use href="#k4"/></svg><svg class="ic"><use href="#k5"/></svg><svg class="ic"><use href="#k6"/></svg><svg class="ic"><use href="#k7"/></svg><svg class="ic"><use href="#k8"/></svg><svg class="ic"><use href="#k9"/></svg><svg class="ic"><use href="#k10"/></svg><svg class="ic"><use href="#k11"/></svg><svg class="ic"><use href="#k12"/></svg>
    </div>
  </aside>

  <svg class="canvas" viewBox="0 0 906 667">
    <defs>
      <filter id="dsh" x="-30%" y="-30%" width="170%" height="170%"><feDropShadow dx="3" dy="4" stdDeviation="2.500" flood-color="#000" flood-opacity=".5"/></filter>
      <linearGradient id="lgb" x1="1" y1="0" x2="0" y2="1"><stop offset="0" stop-color="#7cc6f2"/><stop offset="1" stop-color="#4f8fd0"/></linearGradient>
      <linearGradient id="lgg" x1="1" y1="0" x2="0" y2="1"><stop offset="0" stop-color="#55c47a"/><stop offset=".8" stop-color="#a9dd86"/><stop offset="1" stop-color="#f3e58e"/></linearGradient>
    </defs>
    <g class="sel">
      <path d="M543 426v26"/>
      <rect x="444.500" y="451.500" width="198" height="186"/>
    </g>
    <ellipse class="ring" cx="543" cy="545" rx="91" ry="84.500"/>
    <path id="arc" class="noline" d="M473.500 570A68 68 0 0 1 609.500 570"/>
    <text class="stamp"><textPath href="#arc" startOffset="50%" text-anchor="middle">极光下载站有限公司</textPath></text>
    <path class="star" d="M541 549l8 19h22l-18 12 7 18-19-12-18 12 7-18-19-12h23z"/>
    <g class="rot"><path d="M549 423a8 8 0 1 1 0-11"/><circle cx="543" cy="417.500" r="3.500"/><path class="rh" d="M547 416h11l-5.500 6z"/></g>
    <g class="hnd">
      <circle cx="444" cy="451.500" r="4"/><circle cx="542.500" cy="451.500" r="4"/><circle cx="641.500" cy="451.500" r="4"/>
      <circle cx="444" cy="544.500" r="4"/><circle cx="641.500" cy="544.500" r="4"/>
      <circle cx="444" cy="637.500" r="4"/><circle cx="542.500" cy="637.500" r="4"/><circle cx="641.500" cy="637.500" r="4"/>
    </g>
    <path class="arw" filter="url(#dsh)" d="M225 63l17-20-1 7 54-35 3 2-51 41 7 0z"/>
    <path class="arw" filter="url(#dsh)" d="M225 595l-25 15 4-5-63 30-2-3 61-32-4-2z"/>
    <path class="arw" filter="url(#dsh)" d="M580 582l27 1-5 7 111 25-1 3-113-25-1 5z"/>
    <g class="wm">
      <path fill="url(#lgb)" d="M793 618C770 618 748 628 747 642c0 7 7 9 15 8-9-4-8-13 3-21 8-6 18-9 28-11z"/>
      <path fill="url(#lgg)" d="M784 632c-9-4-24 0-27 8-1 5 5 7 11 5-6-2-5-7 2-8 6-1 11 0 5 8-5 7-18 10-25 12 15 0 35-5 39-15 1-5-1-8-5-10z"/>
      <text x="790" y="636" class="wm1">极光下载站</text>
      <text x="791" y="656" class="wm2">www.xz7.com</text>
    </g>
  </svg>
</div>
</body>
</html>
```
FILE: styles.css
```css
* { box-sizing: border-box; }
html, body { margin: 0; padding: 0; }
body {
  width: 906px;
  height: 667px;
  overflow: hidden;
  background: #fff;
  font-family: "Noto Sans CJK SC", "Liberation Sans", sans-serif;
  font-size: 12px;
  color: #333;
}
.defs { position: absolute; }
.app { position: relative; width: 906px; height: 667px; overflow: hidden; }

/* title bar */
.titlebar { display: flex; height: 30px; background: #217346; color: #fff; align-items: center; }
.qat { display: flex; align-items: center; width: 495px; flex: none; padding-left: 9px; }
.q-redo { width: 18px; height: 14px; }
.chev {
  display: block;
  width: 5px; height: 5px;
  border-right: 1px solid #666; border-bottom: 1px solid #666;
  transform: rotate(45deg) scale(.85);
  margin: 0 auto;
}
.chev.dim { border-color: #4d8f6a; margin: 0 0 2px 5px; }
.q-prev { width: 15px; height: 17px; margin-left: 12px; }
.q-save { width: 14px; height: 14px; margin-left: 14px; }
.q-more { width: 8px; height: 8px; margin-left: 17px; }
.ctx-title { width: 73px; height: 30px; line-height: 27px; background: #1c5e3a; color: #9fcfb2; text-align: center; font-size: 12px; flex: none; }
.doc-title { margin-left: 27px; font-size: 12.500px; white-space: nowrap; color: #f2f7f4; }

/* tabs */
.tabs { display: flex; height: 30px; background: #217346; color: #fff; padding-left: 10px; align-items: stretch; }
.tab { width: auto; padding: 0 12px; margin-right: 3px; line-height: 28px; white-space: nowrap; }
.tab.on { background: #f3f3f3; color: #217346; }
.tab.ctx { background: #1c5e3a; margin-left: 2px; margin-right: 0; }
.bulb { width: 14px; height: 18px; margin: 6px 0 0 16px; }
.search { margin-left: 12px; line-height: 28px; }

/* ribbon */
.ribbon { display: flex; height: 95px; background: #f3f3f3; border-bottom: 1px solid #c6c6c6; padding: 4px 0; overflow: hidden; }
.g { display: flex; flex-direction: column; flex: none; height: 86px; border-right: 1px solid #bdbdbd; }
.g1 { width: 114px; }
.g2 { width: 147px; }
.g3 { width: 142px; }
.g4 { width: 232px; }
.g5 { width: 58px; }
.g6 { width: 142px; padding-left: 7px; }
.g7 { width: 80px; border-right: 0; padding-left: 11px; }
.gb { display: flex; height: 72px; flex: none; }
.lab { height: 14px; line-height: 14px; text-align: center; color: #444; }
.g6 .lab { padding-right: 7px; }
.lab.fl { text-align: left; margin-left: 20px; }
.w62 { width: 62px; }
.w28 { width: 28px; margin-left: 9px; }
.w30 { width: 30px; }
.w36 { width: 36px; }
.w42 { width: 42px; }
.w57 { width: 57px; }
.w60 { width: 60px; }
.ml15 { margin-left: 15px; }
.ml7 { margin-left: 7px; }
.b { display: flex; flex-direction: column; align-items: center; position: relative; padding-top: 4px; flex: none; line-height: 15px; color: #333; white-space: nowrap; }
.b.off { color: #a6a6a6; }
.b span { display: block; }
.b span.chev { margin-top: 4px; border-color: #777; }
.ico { width: 28px; height: 28px; margin-bottom: 4px; flex: none; }
.ico.w30 { width: 30px; }
.ml15.w28 { margin-left: 15px; }
.qm { position: absolute; left: 33px; top: 10px; width: 16px; height: 22px; }
.qm2 { left: 15px; top: 11px; }
.qt { font: bold 22px "Liberation Sans", sans-serif; fill: #3f7fc0; text-anchor: middle; stroke: #fff; stroke-width: .6px; paint-order: stroke; }
.shapes { display: flex; align-items: center; width: 65px; height: 23px; margin: -1px 0 0 7px; background: #c6c6c6; border: 1px solid #8c8c8c; padding-left: 2px; }
.shp { width: 16px; height: 16px; flex: none; }
.shapes span:nth-child(2) { margin-left: 3px; }
.chev.tight { margin: 0 0 2px 6px; border-color: #555; }
.addin { display: flex; align-items: center; padding: 9px 0 0 11px; height: 24px; }
.ai { width: 14px; height: 14px; }
.addin span { margin-left: 5px; white-space: nowrap; }
.vs { width: 14px; height: 16px; margin: -17px 0 0 27px; }
.vt { font: bold 7px "Liberation Sans", sans-serif; fill: #fff; text-anchor: middle; }
.cgrid { display: grid; grid-template-columns: repeat(3, 36px); grid-auto-rows: 23px; margin: -1px 0 0 8px; width: 108px; flex: none; }
.ci { display: flex; align-items: center; }
.ci svg { width: 16px; height: 16px; flex: none; }
.ci .chev { margin: 0 0 2px 5px; border-color: #666; }
.pivot { margin-left: -1px; }
.flexlab { display: flex; align-items: center; }
.chart-lab { margin-left: 96px; }
.launch { width: 9px; height: 9px; margin: 2px 2px 0 auto; }
.inl { display: inline-block; margin: 0 0 3px 3px; border-color: #666; }
.spark { width: 30px; height: 26px; margin-bottom: 6px; flex: none; }
.tl { align-items: flex-start; }

/* gap + formula bar */
.gap { height: 11px; background: #e6e6e6; }
.fbar { position: relative; display: flex; height: 27px; background: #e6e6e6; align-items: stretch; }
.fbar::after { content: ""; position: absolute; left: 87px; right: 0; top: 0; bottom: 0; background: #fff; border: 1px solid #c6c6c6; border-right: 0; }
.namebox { width: 56px; background: #fff; border: 1px solid #c6c6c6; border-left: 0; display: flex; align-items: center; justify-content: space-between; padding-right: 5px; overflow: hidden; flex: none; font-size: 14px; color: #333; }
.namebox span { margin-left: -8px; }
.tri { width: 0; height: 0; border: 4px solid transparent; border-top: 5px solid #666; border-bottom: 0; }
.dots { width: 2px; margin: 7px 15px 7px 14px; background: repeating-linear-gradient(#b5b5b5 0 2px, transparent 2px 5px); flex: none; }
.fx { position: relative; z-index: 1; width: 36px; text-align: center; line-height: 26px; color: #c8c8c8; font-family: "DejaVu Sans", sans-serif; font-size: 15px; flex: none; }

/* sheet */
.sheet { height: 475px; background: #e6e6e6; overflow: hidden; }
.grid { table-layout: fixed; border-collapse: separate; border-spacing: 0; width: 941px; margin-left: -23px; font: 14.670px/14px "Liberation Mono", "Noto Sans CJK SC", monospace; color: #111; background: #fff; margin-top: 11px; }
.ca { width: 128px; } .cb { width: 120px; } .cc { width: 100px; } .cd { width: 89px; } .ce { width: 88px; }
.cf { width: 87px; } .cg2 { width: 87px; } .ch2 { width: 87px; } .ci2 { width: 95px; } .cj { width: 60px; }
.hh th { height: 17px; padding: 2px 0 0; font: normal 13px/14px "Liberation Mono", monospace; color: #444; background: #e6e6e6; border-right: 1px solid #b5b5b5; border-bottom: 1px solid #a8a8a8; }
.grid td { padding: 0 3px; overflow: visible; white-space: nowrap; border-right: 1px solid #d4d4d4; border-bottom: 1px solid #d4d4d4; position: relative; vertical-align: bottom; }
.grid td.nb { border-right-color: transparent; }
.r17 td { height: 17px; }
.r18 td { height: 18px; }
.r19 td { height: 19px; }
.r23 td { height: 23px; }
.grid td.n { text-align: right; font-size: 13px; letter-spacing: -.47px; padding-right: 3px; }
.grid td.lat { font-size: 13.300px; }
.grid td.p30 { padding-left: 30px; }
.grid td.p38 { padding-left: 38px; }
.grid td.phys { background: linear-gradient(165deg, #efc9a8, #c9dfb0); }
.grid td.cmt::after { content: ""; position: absolute; right: 0; top: 0; border-top: 6px solid #f00; border-left: 6px solid transparent; }
.grid td.stat { text-align: center; vertical-align: middle; border-top: 2px solid #000; border-bottom: 1px solid #000; }

/* shapes dropdown */
.menu { position: absolute; left: 165px; top: 86px; width: 260px; height: 581px; background: #fff; border: 1px solid #c8c8c8; border-bottom: 0; box-shadow: 1px 1px 2px rgba(0,0,0,.12); padding-top: 1px; overflow: hidden; }
.mh { width: 240px; height: 24px; line-height: 23px; background: #e9e9e9; color: #5f5f5f; font-weight: 500; padding-left: 9px; font-size: 12px; }
.mg { display: grid; grid-template-columns: repeat(12, 20px); grid-auto-rows: 20px; width: 240px; }
.ic { display: block; width: 20px; height: 20px; fill: none; stroke: #6a6a6a; stroke-width: 1; }
.ic.hl { background: #d9d9d9; }
.bl { font: bold 8px "Liberation Sans", sans-serif; fill: #3b78bd; stroke: none; }
.nm { font: bold 7px "Liberation Sans", sans-serif; fill: #555; stroke: none; text-anchor: middle; }
.nm.sm { font-size: 6px; }

/* canvas overlay */
.canvas { position: absolute; left: 0; top: 0; width: 906px; height: 667px; pointer-events: none; }
.sel { fill: none; stroke: #666; stroke-width: 1; }
.ring { fill: none; stroke: #f00; stroke-width: 3.500; }
.noline { fill: none; stroke: none; }
.stamp { font: 300 18px "Noto Sans CJK SC", sans-serif; letter-spacing: 1.300px; fill: #f42a2a; }
.star { fill: #f00; stroke: #5b7ea5; stroke-width: 1; }
.rot { fill: none; stroke: #777; stroke-width: 2; }
.rh { fill: #777; stroke: none; }
.hnd { fill: #fff; stroke: #666; stroke-width: 2; }
.arw { fill: #ee0a0a; }
.wm { opacity: .85; }
.wm1 { font: bold 21px "Noto Sans CJK SC", sans-serif; fill: #4f9bd9; }
.wm2 { font: 500 15.500px "Liberation Sans", sans-serif; fill: #5cc283; }
```
